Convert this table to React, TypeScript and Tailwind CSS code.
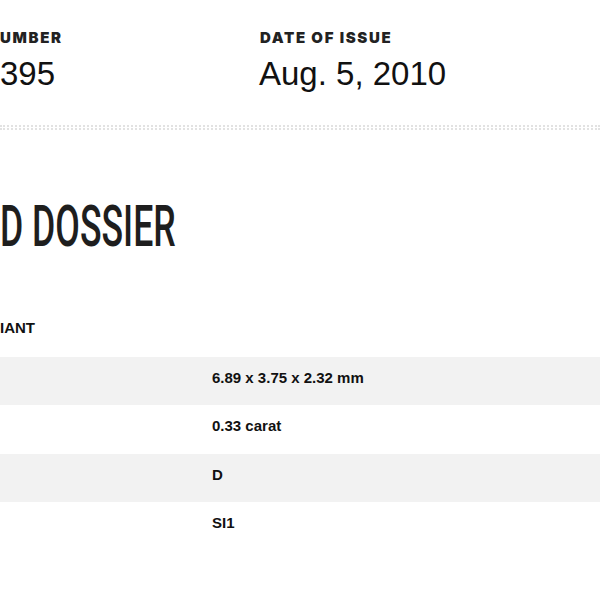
const rows = [
  { value: "6.89 x 3.75 x 2.32 mm", shade: true },
  { value: "0.33 carat", shade: false },
  { value: "D", shade: true },
  { value: "SI1", shade: false },
];

export default function App() {
  return (
    <div className="w-[600px] h-[600px] overflow-hidden bg-white text-[#111]">
      {/* report header */}
      <div className="flex pt-[29px] pb-[32px]">
        <div className="w-[259px]">
          <p className="font-['Inter',sans-serif] font-black text-[15px] leading-[18px] tracking-[0.11em] text-[#222] uppercase">
            UMBER
          </p>
          <p className="mt-[8px] font-['Liberation_Sans',Arial,sans-serif] text-[33px] leading-[38px]">
            395
          </p>
        </div>
        <div className="pl-px">
          <p className="font-['Inter',sans-serif] font-black text-[15px] leading-[18px] tracking-[0.11em] text-[#222] uppercase">
            Date of Issue
          </p>
          <p className="-ml-px mt-[8px] font-['Liberation_Sans',Arial,sans-serif] text-[33px] leading-[38px]">
            Aug. 5, 2010
          </p>
        </div>
      </div>

      <div className="h-[5px] border-y-2 border-dotted border-[#e2e2e2]" />

      <h1 className="mt-[67px] font-['Roboto',sans-serif] font-medium text-[57px] leading-[60px] text-[#1e1e1e] uppercase origin-left scale-x-[0.625] whitespace-nowrap">
        D Dossier
      </h1>

      <h2 className="mt-[62px] font-['Liberation_Sans',Arial,sans-serif] font-bold text-[15px] leading-[18px] uppercase">
        IANT
      </h2>

      <div className="mt-[20px]">
        {rows.map((r) => (
          <div
            key={r.value}
            className={`h-[48.4px] pt-[12px] pl-[212px] font-['Liberation_Sans',Arial,sans-serif] font-bold text-[15px] leading-[18px] ${
              r.shade ? "bg-[#f2f2f2]" : "bg-white"
            }`}
          >
            {r.value}
          </div>
        ))}
      </div>
    </div>
  );
}
